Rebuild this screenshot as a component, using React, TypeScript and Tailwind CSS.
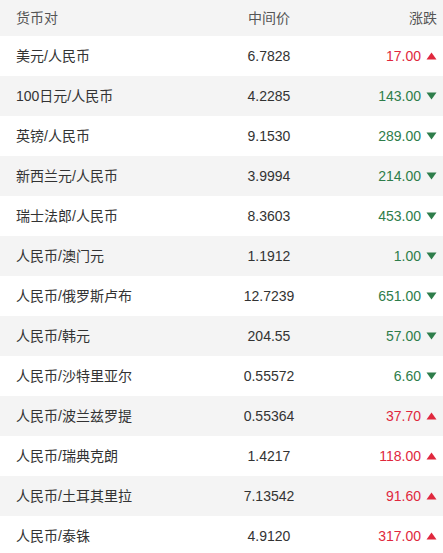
const rows: [string, string, string, boolean][] = [
  ["美元/人民币", "6.7828", "17.00", true],
  ["100日元/人民币", "4.2285", "143.00", false],
  ["英镑/人民币", "9.1530", "289.00", false],
  ["新西兰元/人民币", "3.9994", "214.00", false],
  ["瑞士法郎/人民币", "8.3603", "453.00", false],
  ["人民币/澳门元", "1.1912", "1.00", false],
  ["人民币/俄罗斯卢布", "12.7239", "651.00", false],
  ["人民币/韩元", "204.55", "57.00", false],
  ["人民币/沙特里亚尔", "0.55572", "6.60", false],
  ["人民币/波兰兹罗提", "0.55364", "37.70", true],
  ["人民币/瑞典克朗", "1.4217", "118.00", true],
  ["人民币/土耳其里拉", "7.13542", "91.60", true],
  ["人民币/泰铢", "4.9120", "317.00", true],
];

function Arrow({ up }: { up: boolean }) {
  return (
    <svg width="11" height="8" viewBox="0 0 11 8" className="ml-[5px]">
      {up ? (
        <polygon points="5.5,0.5 10.5,7.5 0.5,7.5" fill="currentColor" />
      ) : (
        <polygon points="0.5,0.5 10.5,0.5 5.5,7.5" fill="currentColor" />
      )}
    </svg>
  );
}

export default function App() {
  return (
    <div
      className="w-[443px] text-[14px] text-[#333]"
      style={{ fontFamily: '"Liberation Sans", "Noto Sans CJK SC", sans-serif' }}
    >
      {/* Header */}
      <div className="grid h-[36px] grid-cols-[200px_106px_1fr] items-center bg-[#f4f4f4] px-4 pr-[6px] text-[#555]">
        <div>货币对</div>
        <div className="text-center">中间价</div>
        <div className="text-right">涨跌</div>
      </div>

      {rows.map(([pair, mid, chg, up], i) => (
        <div
          key={pair}
          className={`grid h-[40px] grid-cols-[200px_106px_1fr] items-center px-4 pr-[6px] ${
            i % 2 === 0 ? "bg-white" : "bg-[#f4f4f4]"
          }`}
        >
          <div>{pair}</div>
          <div className="text-center">{mid}</div>
          <div
            className={`flex items-center justify-end ${
              up ? "text-[#e0283d]" : "text-[#2e7d4a]"
            }`}
          >
            <span>{chg}</span>
            <Arrow up={up} />
          </div>
        </div>
      ))}
    </div>
  );
}
